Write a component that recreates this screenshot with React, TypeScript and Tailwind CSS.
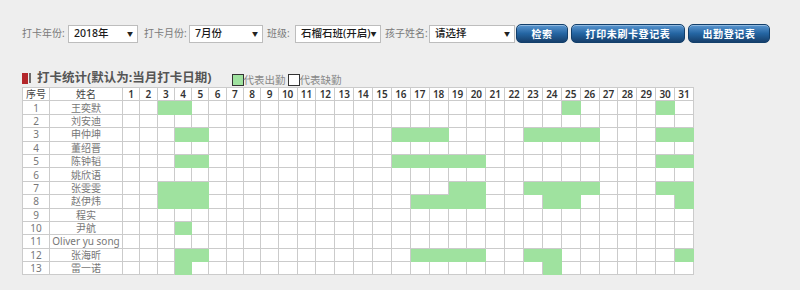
import React from "react";

const students: { name: string; days: number[] }[] = [
  { name: "王奕默", days: [3, 4, 25, 30] },
  { name: "刘安迪", days: [] },
  { name: "申仲坤", days: [4, 5, 16, 17, 18, 23, 24, 25, 26, 30, 31] },
  { name: "董绍晋", days: [] },
  { name: "陈钟韬", days: [4, 5, 16, 17, 18, 19, 20, 30, 31] },
  { name: "姚欣语", days: [] },
  { name: "张雯雯", days: [3, 4, 5, 19, 20, 23, 24, 25, 26, 30, 31] },
  { name: "赵伊炜", days: [3, 4, 5, 17, 18, 19, 20, 24, 25, 31] },
  { name: "程实", days: [] },
  { name: "尹航", days: [4] },
  { name: "Oliver yu song", days: [] },
  { name: "张海昕", days: [4, 5, 17, 18, 19, 20, 23, 24, 31] },
  { name: "雷一诺", days: [4, 24] },
];

const dayList = Array.from({ length: 31 }, (_, i) => i + 1);

const FakeSelect: React.FC<{ value: string; width: string }> = ({
  value,
  width,
}) => (
  <div
    className={`${width} h-[18px] shrink-0 bg-white border border-[#bdbdbd] flex items-center justify-between pl-[5px] pr-[4px]`}
  >
    <span className="text-[10.5px] font-medium text-[#1a1a1a] leading-none whitespace-nowrap">
      {value}
    </span>
    <span className="text-[6px] text-[#222] leading-none">▼</span>
  </div>
);

const BlueButton: React.FC<{ label: string; width: string }> = ({
  label,
  width,
}) => (
  <button
    className={`${width} h-[19px] shrink-0 rounded-[5px] border border-[#123f6b] bg-gradient-to-b from-[#5a97d1] via-[#2465a2] to-[#163f6c] text-white text-[10px] font-bold tracking-[0.6px] leading-none whitespace-nowrap flex items-center justify-center shadow-[inset_0_1px_0_rgba(255,255,255,0.35)]`}
  >
    {label}
  </button>
);

const cell =
  "border-r border-b flex items-center justify-center leading-none whitespace-nowrap";

export default function App() {
  return (
    <div className="w-[800px] h-[290px] bg-[#eeeeee] pl-[22px] pt-[24px] font-['Noto_Sans','Noto_Sans_CJK_SC',sans-serif] overflow-hidden">
      {/* toolbar */}
      <div className="flex items-center h-[19px] text-[10px] text-[#7a7a7a] whitespace-nowrap">
        <span className="w-[46px] shrink-0">打卡年份:</span>
        <FakeSelect value="2018年" width="w-[70px]" />
        <span className="ml-[6px] w-[45px] shrink-0">打卡月份:</span>
        <FakeSelect value="7月份" width="w-[74px]" />
        <span className="ml-[4px] w-[28px] shrink-0">班级:</span>
        <FakeSelect value="石榴石班(开启)" width="w-[86px]" />
        <span className="ml-[4px] w-[44px] shrink-0">孩子姓名:</span>
        <FakeSelect value="请选择" width="w-[86px]" />
        <div className="ml-[1px] flex gap-[3px]">
          <BlueButton label="检索" width="w-[52px]" />
          <BlueButton label="打印未刷卡登记表" width="w-[114px]" />
          <BlueButton label="出勤登记表" width="w-[82px]" />
        </div>
      </div>

      {/* title */}
      <div className="mt-[25px] flex items-end h-[18px]">
        <div className="flex items-center h-[16px]">
          <div className="w-[6px] h-[11px] bg-[#b3262b]" />
          <div className="ml-[1px] w-[2px] h-[10px] bg-[#6d6d6d]" />
        </div>
        <span className="ml-[6px] text-[12.5px] font-bold text-[#555] leading-[16px] whitespace-nowrap">
          打卡统计(默认为:当月打卡日期)
        </span>
        <div className="ml-[20px] flex items-end text-[10.5px] text-[#888] leading-none whitespace-nowrap">
          <div className="w-[12px] h-[12px] bg-[#9fe29f] border border-[#333]" />
          <span className="mb-[1px]">代表出勤</span>
          <div className="ml-[2px] w-[12px] h-[12px] bg-white border border-[#333]" />
          <span className="mb-[1px]">代表缺勤</span>
        </div>
      </div>

      {/* table */}
      <div className="mt-[1px] w-[672px] grid grid-cols-[27px_73px_repeat(9,17.3px)_repeat(22,18.88px)] auto-rows-[13.4px] bg-white border-l border-t border-[#cbcbcb]">
        <div className={`${cell} border-[#cbcbcb] text-[10px] text-[#444]`}>序号</div>
        <div className={`${cell} border-[#cbcbcb] text-[10px] text-[#444]`}>姓名</div>
        {dayList.map((d) => (
          <div
            key={`h${d}`}
            className={`${cell} border-[#cbcbcb] text-[10px] text-[#333] font-semibold`}
          >
            {d}
          </div>
        ))}
        {students.map((s, i) => (
          <React.Fragment key={s.name}>
            <div className={`${cell} border-[#cbcbcb] text-[10px] text-[#777]`}>
              {i + 1}
            </div>
            <div className={`${cell} border-[#cbcbcb] text-[10px] text-[#777]`}>
              {s.name}
            </div>
            {dayList.map((d) =>
              s.days.includes(d) ? (
                <div
                  key={d}
                  className={`${cell} bg-[#9fe29f] border-[#9fe29f]`}
                />
              ) : (
                <div key={d} className={`${cell} border-[#cbcbcb]`} />
              )
            )}
          </React.Fragment>
        ))}
      </div>
    </div>
  );
}
